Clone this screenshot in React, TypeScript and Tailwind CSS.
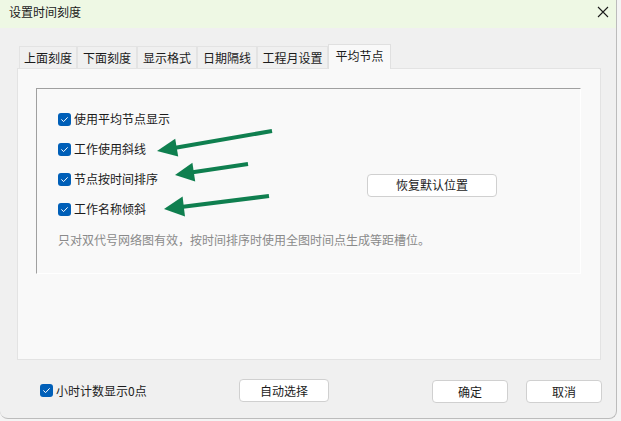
import type { ReactNode } from "react";

const FONT = "font-['Microsoft_YaHei_UI','Noto_Sans_CJK_SC',sans-serif]";

const tabs = [
  { label: "上面刻度", w: "w-[58px]" },
  { label: "下面刻度", w: "w-[60px]" },
  { label: "显示格式", w: "w-[60px]" },
  { label: "日期隔线", w: "w-[60px]" },
  { label: "工程月设置", w: "w-[71px]" },
];

const options = ["使用平均节点显示", "工作使用斜线", "节点按时间排序", "工作名称倾斜"];

const CheckBox = ({ children }: { children: ReactNode }) => (
  <label className="flex items-center gap-[3px] text-[12px] leading-[16px] text-[#1b1b1b]">
    <span className="flex h-[13px] w-[13px] items-center justify-center rounded-[3px] bg-[#005fb8]">
      <svg width="9" height="9" viewBox="0 0 9 9" fill="none">
        <path d="M1.6 4.7 L3.6 6.6 L7.4 2.6" stroke="white" strokeWidth="1" strokeLinecap="round" strokeLinejoin="round" />
      </svg>
    </span>
    {children}
  </label>
);

const Button = ({ children, w }: { children: ReactNode; w: string }) => (
  <button
    className={`${w} h-[23px] rounded-[4px] border border-[#d0d0d0] bg-white text-[12px] leading-[16px] text-[#1b1b1b]`}
  >
    {children}
  </button>
);

// green annotation arrows, drawn over the dialog
const Arrows = () => (
  <svg className="pointer-events-none absolute inset-0" width="617" height="419">
    <g fill="#0f7f4f" stroke="#0f7f4f">
      <line x1="272" y1="131" x2="174" y2="148" strokeWidth="4" />
      <polygon points="157,151 178.2,156.5 175.2,138.7" stroke="none" />
      <line x1="248" y1="164" x2="191" y2="172.6" strokeWidth="4" />
      <polygon points="175,175 195.2,181.6 192.4,162.8" stroke="none" />
      <line x1="269" y1="196" x2="181" y2="207" strokeWidth="4" />
      <polygon points="164,209 185,216.4 182.6,196.6" stroke="none" />
    </g>
  </svg>
);

export default function App() {
  return (
    <div className={`h-[421px] w-[621px] bg-[#f4f4f4] ${FONT}`}>
      <div className="relative flex h-[419px] w-[617px] flex-col overflow-hidden rounded-b-[8px] border-r border-b border-[#bcbcbc] bg-[#f0f0f0]">
        {/* title bar */}
        <div className="flex h-[28px] shrink-0 items-start justify-between bg-[#eef8e4] pl-[9px] pr-[7px] pt-[4px]">
          <span className="text-[12px] leading-[16px] text-[#1b1b1b]">设置时间刻度</span>
          <svg width="12" height="12" viewBox="0 0 12 12" className="mt-[2px]">
            <path d="M1 1 L11 11 M11 1 L1 11" stroke="#1b1b1b" strokeWidth="1.1" />
          </svg>
        </div>

        {/* tabs */}
        <div className="ml-[17px] mt-[16px] flex items-end pl-[2px]">
          {tabs.map((t) => (
            <div
              key={t.label}
              className={`${t.w} flex h-[22px] items-center justify-center border-t border-l border-r border-[#e3e3e3] bg-[#f0f0f0] text-[12px] leading-[16px] text-[#1b1b1b]`}
            >
              {t.label}
            </div>
          ))}
          <div className="relative z-10 -mb-px flex h-[25px] w-[63px] items-start justify-center border-t border-l border-r border-[#e0e0e0] bg-[#f9f9f9] pt-[3px] text-[12px] leading-[16px] text-[#1b1b1b]">
            平均节点
          </div>
        </div>

        {/* tab page */}
        <div className="ml-[17px] h-[292px] w-[584px] border border-[#e3e3e3] bg-[#f9f9f9] pl-[18px] pt-[19px]">
          <div className="flex h-[186px] w-[545px] border-t border-l border-r border-b border-t-[#a0a0a0] border-l-[#a0a0a0] border-r-white border-b-white pl-[21px] pt-[15px]">
            <div className="flex w-[309px] flex-col">
              {options.map((o) => (
                <div key={o} className="flex h-[30px] items-center">
                  <CheckBox>{o}</CheckBox>
                </div>
              ))}
              <p className="mt-[8px] w-[480px] whitespace-nowrap text-[12px] leading-[16px] text-[#8a8a8a]">
                只对双代号网络图有效，按时间排序时使用全图时间点生成等距槽位。
              </p>
            </div>
            <div className="pt-[67px]">
              <Button w="w-[130px]">恢复默认位置</Button>
            </div>
          </div>
        </div>

        {/* footer */}
        <div className="mt-[19px] flex h-[23px] items-center pl-[40px]">
          <div className="w-[199px]">
            <CheckBox>小时计数显示0点</CheckBox>
          </div>
          <Button w="w-[90px]">自动选择</Button>
          <div className="ml-[103px]">
            <Button w="w-[76px]">确定</Button>
          </div>
          <div className="ml-[18px]">
            <Button w="w-[76px]">取消</Button>
          </div>
        </div>

        <Arrows />
      </div>
    </div>
  );
}
